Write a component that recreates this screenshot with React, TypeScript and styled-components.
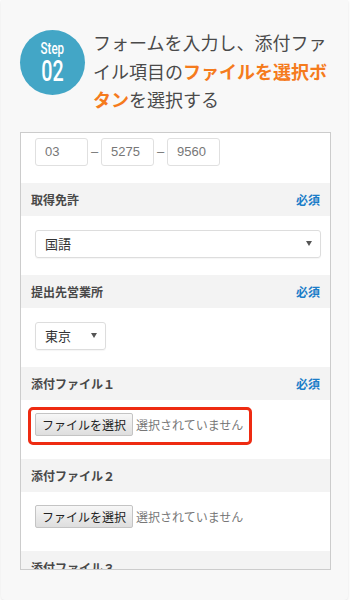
import styled, { createGlobalStyle } from "styled-components";

const GlobalStyle = createGlobalStyle`
  html, body {
    margin: 0;
    padding: 0;
    background: #ffffff;
  }
  body {
    font-family: "Noto Sans CJK JP", "Noto Sans", sans-serif;
  }
`;

const Card = styled.div`
  box-sizing: border-box;
  margin: 0 2px 0 1px;
  height: 600px;
  padding: 29px 17px 0 19px;
  background: #f8f8f8;
  border-radius: 0 0 4px 4px;
  box-shadow: 0 1px 3px rgba(0, 0, 0, 0.12);
`;

const Header = styled.div`
  display: flex;
  align-items: flex-start;
  gap: 8px;
`;

const Badge = styled.div`
  flex: none;
  width: 65px;
  height: 65px;
  margin-top: 1px;
  border-radius: 50%;
  background: #43a6c6;
  color: #ffffff;
  display: flex;
  flex-direction: column;
  align-items: center;
  justify-content: center;
  font-family: Roboto, "Liberation Sans", sans-serif;
`;

const BadgeText = styled.span<{ $size: number }>`
  display: block;
  font-size: ${(p) => p.$size}px;
  line-height: ${(p) => p.$size}px;
  font-weight: 500;
  transform: scaleX(0.68);
`;

const Lead = styled.p`
  margin: -1px 0 0;
  width: 240px;
  font-size: 18px;
  line-height: 28.5px;
  color: #4a4a4a;
`;

const Accent = styled.span`
  color: #f57b1d;
  font-weight: 700;
`;

const Panel = styled.div`
  box-sizing: border-box;
  margin-top: 18px;
  height: 438px;
  border: 1px solid #cccccc;
  background: #ffffff;
  overflow: hidden;
`;

const Body = styled.div<{ $pad: string }>`
  padding: ${(p) => p.$pad};
`;

const Band = styled.div`
  height: 33px;
  padding: 0 10px;
  display: flex;
  align-items: center;
  justify-content: space-between;
  background: #f3f3f3;
  font-size: 12px;
  font-weight: 700;
  color: #484848;
`;

const Required = styled.span`
  color: #1b7dc8;
  font-weight: 700;
`;

const PhoneRow = styled.div`
  display: flex;
  align-items: center;
`;

const PhoneInput = styled.input`
  box-sizing: border-box;
  width: 53px;
  height: 28px;
  padding: 0 9px;
  border: 1px solid #e0e0e0;
  border-radius: 3px;
  font-family: "Liberation Sans", "Noto Sans", sans-serif;
  font-size: 13px;
  color: #777777;
  background: #ffffff;
  outline: none;
`;

const Dash = styled.span`
  width: 13px;
  text-align: center;
  font-family: "Liberation Sans", sans-serif;
  font-size: 13px;
  color: #777777;
`;

const FakeSelect = styled.div<{ $w: number }>`
  box-sizing: border-box;
  width: ${(p) => p.$w}px;
  height: 28px;
  padding: 0 8px 0 9px;
  display: flex;
  align-items: center;
  justify-content: space-between;
  border: 1px solid #dddddd;
  border-radius: 3px;
  box-shadow: 0 1px 1px rgba(0, 0, 0, 0.04);
  font-size: 13px;
  color: #333333;
`;

const Caret = styled.span`
  width: 0;
  height: 0;
  border-left: 3px solid transparent;
  border-right: 3px solid transparent;
  border-top: 5px solid #555555;
`;

const FileRow = styled.div`
  position: relative;
  display: flex;
  align-items: center;
  gap: 3px;
`;

const FileButton = styled.button`
  box-sizing: border-box;
  height: 23px;
  padding: 0 6px;
  border: 1px solid #c4c4c4;
  border-radius: 2px;
  background: linear-gradient(#f7f7f7, #dedede);
  font-family: "Noto Sans CJK JP", sans-serif;
  font-size: 12px;
  color: #222222;
`;

const FileStatus = styled.span`
  font-size: 12px;
  color: #777777;
`;

const Highlight = styled.div`
  position: absolute;
  top: -6px;
  left: -7px;
  width: 224px;
  height: 38px;
  box-sizing: border-box;
  border: 3.5px solid #ee2b12;
  border-radius: 5px;
  pointer-events: none;
`;

function FileField({ marked }: { marked?: boolean }) {
  return (
    <FileRow>
      <FileButton type="button">ファイルを選択</FileButton>
      <FileStatus>選択されていません</FileStatus>
      {marked && <Highlight />}
    </FileRow>
  );
}

export default function App() {
  return (
    <>
      <GlobalStyle />
      <Card>
        <Header>
          <Badge>
            <BadgeText $size={17}>Step</BadgeText>
            <BadgeText $size={29}>02</BadgeText>
          </Badge>
          <Lead>
            フォームを入力し、添付ファイル項目の<Accent>ファイルを選択ボタン</Accent>を選択する
          </Lead>
        </Header>

        <Panel>
          <Body $pad="5px 14px 17px">
            <PhoneRow>
              <PhoneInput readOnly defaultValue="03" />
              <Dash>–</Dash>
              <PhoneInput readOnly defaultValue="5275" />
              <Dash>–</Dash>
              <PhoneInput readOnly defaultValue="9560" />
            </PhoneRow>
          </Body>

          <Band>
            取得免許<Required>必須</Required>
          </Band>
          <Body $pad="14px 14px 17px">
            <FakeSelect $w={286}>
              国語<Caret />
            </FakeSelect>
          </Body>

          <Band>
            提出先営業所<Required>必須</Required>
          </Band>
          <Body $pad="14px 14px 17px">
            <FakeSelect $w={71}>
              東京<Caret />
            </FakeSelect>
          </Body>

          <Band>
            添付ファイル１<Required>必須</Required>
          </Band>
          <Body $pad="13px 14px 23px">
            <FileField marked />
          </Body>

          <Band>添付ファイル２</Band>
          <Body $pad="13px 14px 23px">
            <FileField />
          </Body>

          <Band>添付ファイル３</Band>
          <Body $pad="13px 14px 23px">
            <FileField />
          </Body>
        </Panel>
      </Card>
    </>
  );
}
